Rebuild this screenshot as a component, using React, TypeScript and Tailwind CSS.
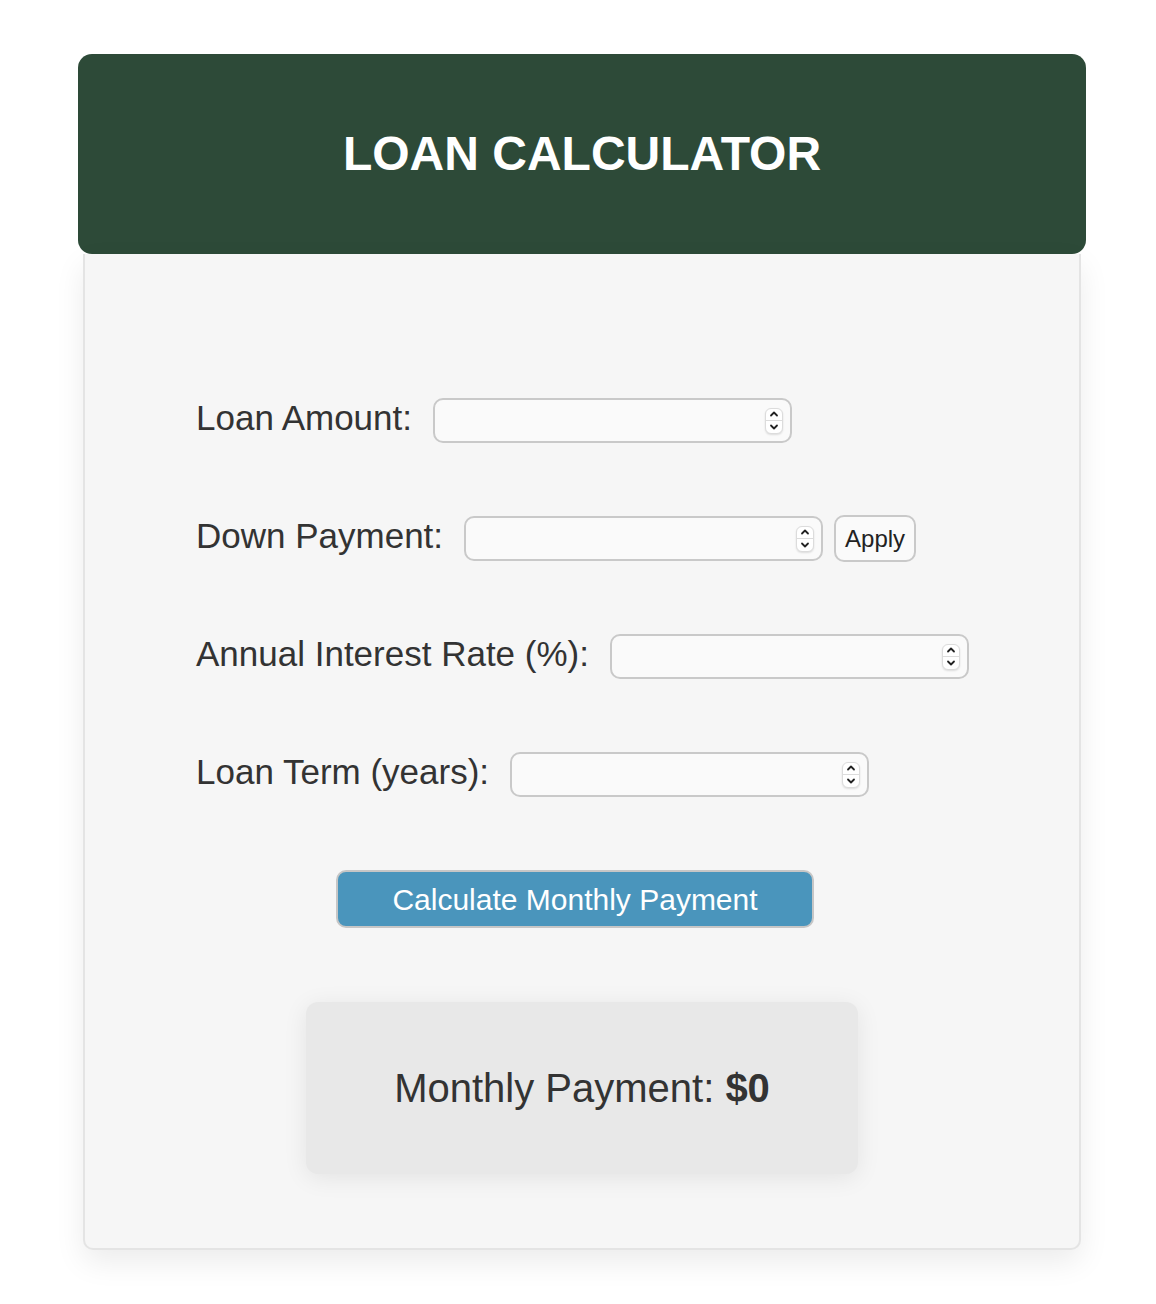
import { useState } from 'react';

const font = { fontFamily: '"Liberation Sans", Arial, sans-serif' };

function Spinner() {
  return (
    <div className="flex h-[26px] w-[18px] flex-col items-center justify-center rounded-[6px] border border-[#dcdcdc] bg-white shadow-[0_1px_2px_rgba(0,0,0,0.12)]">
      <svg width="10" height="10" viewBox="0 0 10 10" className="mb-[1px]">
        <path d="M2 6.5 L5 3.5 L8 6.5" fill="none" stroke="#222" strokeWidth="1.8" strokeLinecap="round" strokeLinejoin="round" />
      </svg>
      <div className="h-px w-full bg-[#dcdcdc]" />
      <svg width="10" height="10" viewBox="0 0 10 10" className="mt-[1px]">
        <path d="M2 3.5 L5 6.5 L8 3.5" fill="none" stroke="#222" strokeWidth="1.8" strokeLinecap="round" strokeLinejoin="round" />
      </svg>
    </div>
  );
}

function NumberField({ value, onChange }: { value: string; onChange: (v: string) => void }) {
  return (
    <div className="flex h-[45px] w-[359px] items-center rounded-[10px] border-2 border-[#c9c9c9] bg-[#fafafa] pr-[7px] pl-3">
      <input
        value={value}
        onChange={(e) => onChange(e.target.value)}
        className="min-w-0 flex-1 bg-transparent text-[20px] text-[#333] outline-none"
        style={font}
      />
      <Spinner />
    </div>
  );
}

export default function App() {
  const [amount, setAmount] = useState('');
  const [down, setDown] = useState('');
  const [rate, setRate] = useState('');
  const [term, setTerm] = useState('');

  const rows = [
    { label: 'Loan Amount:', value: amount, set: setAmount, apply: false },
    { label: 'Down Payment:', value: down, set: setDown, apply: true },
    { label: 'Annual Interest Rate (%):', value: rate, set: setRate, apply: false },
    { label: 'Loan Term (years):', value: term, set: setTerm, apply: false },
  ];

  return (
    <div className="min-h-[1304px] w-[1156px] bg-white pt-[54px]" style={font}>
      <div className="ml-[78px] w-[1008px]">
        {/* Header */}
        <div className="flex h-[200px] items-center justify-center rounded-[14px] bg-[#2d4a38]">
          <h1 className="text-[48px] font-bold text-white">LOAN CALCULATOR</h1>
        </div>

        {/* Card */}
        <div className="mx-[5px] rounded-b-[10px] border-2 border-t-0 border-[#e4e4e4] bg-[#f6f6f6] pt-[144px] pb-[74px] shadow-[0_12px_30px_rgba(0,0,0,0.08)]">
          <div className="pl-[111px]">
            {rows.map((row) => (
              <div key={row.label} className="mb-[73px] flex h-[45px] items-center">
                <label className="mr-[21px] -mt-[4px] text-[35px] text-[#333]">{row.label}</label>
                <NumberField value={row.value} onChange={row.set} />
                {row.apply && (
                  <button className="ml-[11px] h-[47px] w-[82px] rounded-[10px] border-2 border-[#c9c9c9] bg-[#fafafa] text-[24px] text-[#222]">
                    Apply
                  </button>
                )}
              </div>
            ))}
          </div>

          <div className="flex justify-center pr-[14px]">
            <button className="h-[58px] w-[478px] rounded-[10px] border-2 border-[#c6c6c6] bg-[#4a95bc] text-[30px] text-white">
              Calculate Monthly Payment
            </button>
          </div>

          <div className="mt-[74px] flex justify-center">
            <div className="flex h-[172px] w-[552px] items-center justify-center rounded-[12px] bg-[#e8e8e8] shadow-[0_4px_24px_rgba(0,0,0,0.08)]">
              <p className="text-[40px] text-[#333]">
                Monthly Payment: <span className="font-bold">$0</span>
              </p>
            </div>
          </div>
        </div>
      </div>
    </div>
  );
}
